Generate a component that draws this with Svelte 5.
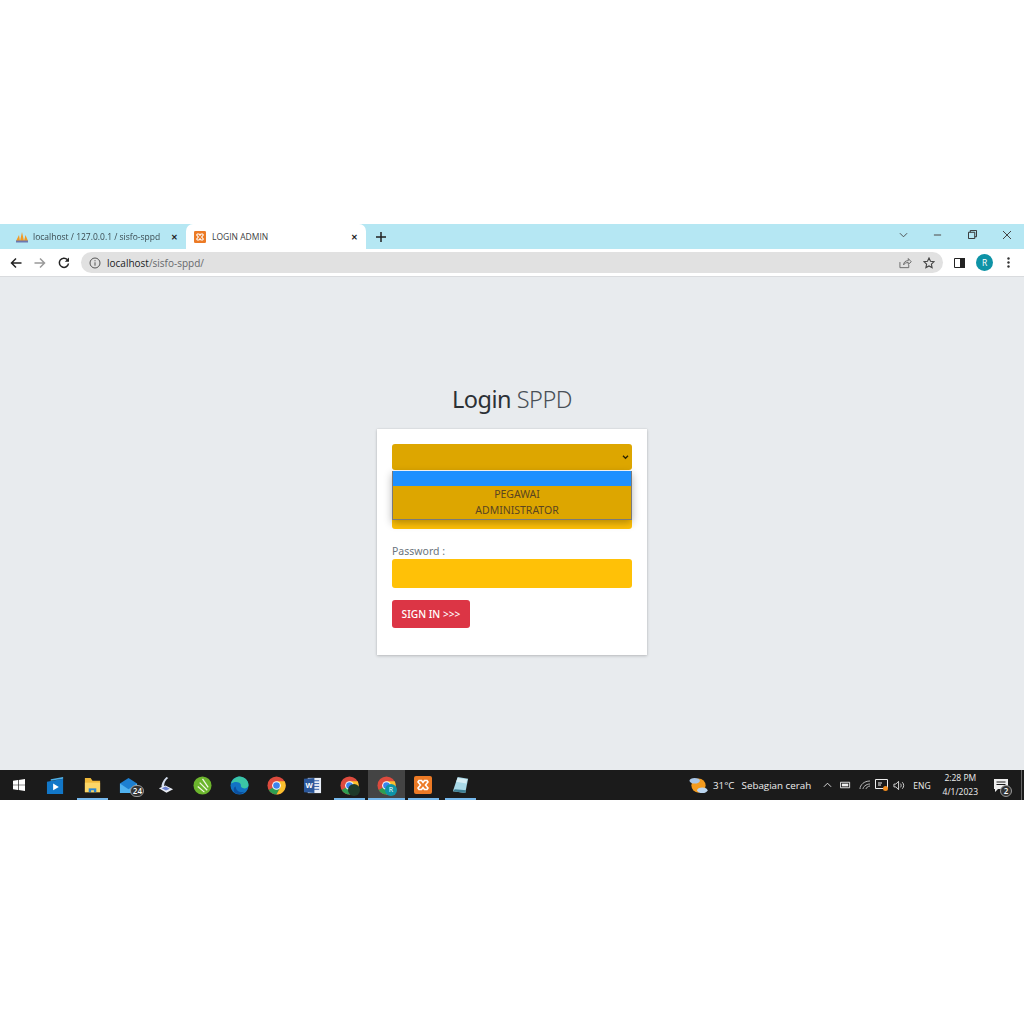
<script>
  const taskIcons = [
    { id: 'video' },
    { id: 'folder', open: true },
    { id: 'mail' },
    { id: 'scanner' },
    { id: 'corel' },
    { id: 'edge' },
    { id: 'chrome' },
    { id: 'word' },
    { id: 'chrome', badge: 'photo', open: true },
    { id: 'chrome', badge: 'r', open: true, active: true },
    { id: 'xampp', open: true },
    { id: 'note', open: true }
  ];
</script>

{#snippet chrome()}
  <svg viewBox="0 0 20 20" width="19" height="19">
    <circle cx="10" cy="10" r="9.5" fill="#dd4b3e" />
    <path d="M10 10 1.8 14.8A9.5 9.5 0 0 0 10 19.5L14.8 11z" fill="#2f9e52" />
    <path d="M10 5.5h8.6A9.5 9.5 0 0 1 10 19.5L14 12z" fill="#fbc02d" />
    <circle cx="10" cy="10" r="4.6" fill="#fff" />
    <circle cx="10" cy="10" r="3.5" fill="#3d84ec" />
  </svg>
{/snippet}

{#snippet xampp(size)}
  <svg viewBox="0 0 18 18" width={size} height={size}>
    <rect width="18" height="18" rx="2" fill="#ec7a25" />
    <path d="M5 4.5h2.5l1.5 2 1.500-2H13l1 1.500-2.500 3 2.500 3-1 1.500h-2.500l-1.500-2-1.500 2H5L4 12l2.500-3L4 6z" fill="none" stroke="#fff" stroke-width="1.600" />
  </svg>
{/snippet}

<div class="screen">
  <div class="browser">
    <div class="tabstrip">
      <div class="tab">
        <svg class="favicon" viewBox="0 0 14 12" width="14" height="12">
          <path d="M1 10 4 4l1 6zM5 10l2-9 2 9zM9 10l1.500-6L13 10z" fill="#f09a24" />
          <rect x="1" y="9.500" width="12" height="2" fill="#6c78af" />
        </svg>
        <span class="tab-title fade">localhost / 127.0.0.1 / sisfo-sppd</span>
        <span class="tab-close">✕</span>
      </div>
      <div class="tab active">
        {@render xampp(12)}
        <span class="tab-title">LOGIN ADMIN</span>
        <span class="tab-close">✕</span>
      </div>
      <svg class="newtab" viewBox="0 0 10 10" width="10" height="10">
        <path d="M5 0v10M0 5h10" stroke="#222" stroke-width="1.500" />
      </svg>
      <div class="window-controls">
        <svg viewBox="0 0 10 6" width="9" height="6"><path d="M1 1l4 4 4-4" fill="none" stroke="#444" /></svg>
        <svg viewBox="0 0 10 2" width="9" height="2"><path d="M1 1h8" stroke="#555" stroke-width="1.200" /></svg>
        <svg viewBox="0 0 10 10" width="9" height="9"><path d="M.5 2.500h7v7h-7zM2.500 2.500v-2h7v7h-2" fill="none" stroke="#333" stroke-width="1.100" /></svg>
        <svg viewBox="0 0 10 10" width="10" height="10"><path d="M1 1l8 8M9 1l-8 8" stroke="#444" /></svg>
      </div>
    </div>

    <div class="toolbar">
      <svg class="nav" viewBox="0 0 12 12" width="12" height="12"><path d="M11.500 6H1.500M6 1.500 1.500 6 6 10.500" fill="none" stroke="#222" stroke-width="1.500" /></svg>
      <svg class="nav" viewBox="0 0 12 12" width="12" height="12"><path d="M.5 6h10M6 1.500 10.500 6 6 10.500" fill="none" stroke="#999" stroke-width="1.500" /></svg>
      <svg class="nav" viewBox="0 0 12 12" width="12" height="12"><path d="M10.500 6.500A4.600 4.600 0 1 1 9.300 2.600" fill="none" stroke="#222" stroke-width="1.500" /><path d="M11 .5v4.200H6.800z" fill="#222" /></svg>
      <div class="omnibox">
        <svg viewBox="0 0 12 12" width="12" height="12"><circle cx="6" cy="6" r="5" fill="none" stroke="#555" /><path d="M6 5.300v3.400M6 3.200v1.100" stroke="#555" /></svg>
        <span class="url"><b>localhost</b>/sisfo-sppd/</span>
        <svg class="share" viewBox="0 0 14 12" width="13" height="12"><path d="M1 5v6h9.500V8M5 8c0-3 2-4.500 5-4.500V1.200L13.200 4.700 10 7.500V5.500C8 5.500 6 6 5 8z" fill="none" stroke="#666" /></svg>
        <svg viewBox="0 0 12 12" width="12" height="12"><path d="M6 1l1.500 3.300 3.500.4-2.600 2.400.7 3.500L6 8.900l-3.100 1.700.7-3.500L1 4.700l3.500-.4z" fill="none" stroke="#444" stroke-width="1.100" /></svg>
      </div>
      <svg class="sidepanel" viewBox="0 0 11 10" width="11" height="10"><path d="M.5.500h10v9H.5z" fill="none" stroke="#222" /><rect x="6" y="0" width="5" height="10" fill="#222" /></svg>
      <span class="avatar">R</span>
      <svg class="dots" viewBox="0 0 3 11" width="3" height="11"><circle cx="1.500" cy="1.500" r="1.200" fill="#333" /><circle cx="1.500" cy="5.500" r="1.200" fill="#333" /><circle cx="1.500" cy="9.500" r="1.200" fill="#333" /></svg>
    </div>

    <main class="page">
      <h1 class="logo"><b>Login</b> SPPD</h1>
      <div class="card">
        <div class="group level">
          <div class="select">
            <svg viewBox="0 0 8 6" width="7" height="5"><path d="M1 1l3 3 3-3" fill="none" stroke="#2b2200" stroke-width="1.600" /></svg>
          </div>
          <div class="dropdown">
            <div class="option selected">&nbsp;</div>
            <div class="option">PEGAWAI</div>
            <div class="option">ADMINISTRATOR</div>
          </div>
        </div>
        <div class="group username">
          <div class="input short"></div>
        </div>
        <div class="group">
          <div class="label">Password :</div>
          <div class="input"></div>
        </div>
        <button type="button" class="signin">SIGN IN &gt;&gt;&gt;</button>
      </div>
    </main>

    <div class="taskbar">
      <div class="start">
        <svg viewBox="0 0 12 12" width="12" height="12">
          <path d="M0 1.700 5 1v4.700H0zM5.700.9 12 0v5.700H5.700zM0 6.300h5V11l-5-.7zM5.700 6.300H12V12l-6.300-.9z" fill="#fff" />
        </svg>
      </div>
      {#each taskIcons as icon}
        <div class="task" class:open={icon.open} class:current={icon.active}>
          {#if icon.id === 'video'}
            <svg viewBox="0 0 20 20" width="19" height="19">
              <path d="M1 6 18 3v16H1z" fill="#1277c8" /><path d="M5 3.500 18 1v2L5 5z" fill="#4fb0e8" />
              <path d="M7.500 8v7l6-3.500z" fill="#fff" />
            </svg>
          {:else if icon.id === 'folder'}
            <svg viewBox="0 0 20 20" width="19" height="19">
              <path d="M2 2h6l2 3h8v12H2z" fill="#f0b93a" /><path d="M2 7h16v10H2z" fill="#fbd667" />
              <path d="M6 17v-4h8v4z" fill="#2a86d0" /><path d="M8.500 17v-2h3v2z" fill="#fbd667" />
            </svg>
          {:else if icon.id === 'mail'}
            <svg viewBox="0 0 20 20" width="19" height="19">
              <path d="M1 8l9-6 9 6v10H1z" fill="#1d7fd1" /><path d="M1 8l9 6 9-6v10H1z" fill="#4fb2f0" />
            </svg>
            <span class="count">24</span>
          {:else if icon.id === 'scanner'}
            <svg viewBox="0 0 20 20" width="19" height="19">
              <path d="M11 1C7 5 5 9 6 13l3-1c-1-3 0-7 4-10z" fill="#d5deee" />
              <path d="M3 13l7-3 8 4-7 3.500z" fill="#e8ecf4" /><path d="M6 13l4-2 4.500 2.500-4 1.800z" fill="#6a7fd0" />
            </svg>
          {:else if icon.id === 'corel'}
            <svg viewBox="0 0 20 20" width="19" height="19">
              <circle cx="10" cy="10" r="9.500" fill="#6cb52d" />
              <path d="M5 11l7 6M7 7l8 8M10 3l6 9" stroke="#f2f7e6" stroke-width="1.300" />
            </svg>
          {:else if icon.id === 'edge'}
            <svg viewBox="0 0 20 20" width="19" height="19">
              <circle cx="10" cy="10" r="9.500" fill="#1273c4" />
              <path d="M1 8C3 2 8 .5 10 .5c5 0 9.500 4 9.500 9 0 3-3 4-5.500 3.500-2-.5-3-2-2.500-3.500C11 6 5 5 1 8z" fill="#3bc6a5" />
              <path d="M6 11c0 4 4 7 9 5.500-2 2.500-7 3.500-10 1C3 15 4 11 6 11z" fill="#0c4f9e" />
            </svg>
          {:else if icon.id === 'chrome'}
            {@render chrome()}
            {#if icon.badge === 'photo'}
              <span class="badge photo"></span>
            {:else if icon.badge === 'r'}
              <span class="badge">R</span>
            {/if}
          {:else if icon.id === 'word'}
            <svg viewBox="0 0 20 20" width="19" height="19">
              <rect x="5" y="2" width="14" height="16" fill="#e8eef8" />
              <path d="M11 5h6M11 8h6M11 11h6M11 14h6" stroke="#2b5aa6" />
              <path d="M1 3l11-1v16L1 17z" fill="#2b579a" />
              <text x="6.500" y="13" font-size="8" font-family="Liberation Sans" font-weight="700" fill="#fff" text-anchor="middle">W</text>
            </svg>
          {:else if icon.id === 'xampp'}
            {@render xampp(18)}
          {:else if icon.id === 'note'}
            <svg viewBox="0 0 20 20" width="19" height="19">
              <path d="M7 1l11 2-3 15-13-2z" fill="#a9d9e8" /><path d="M2 16l13 2 1-3-12-1z" fill="#3e7f95" />
              <path d="M7 2l10 1.800-1 4-10.500-1.800z" fill="#d7eef5" />
            </svg>
          {/if}
        </div>
      {/each}

      <div class="tray">
        <svg class="weather" viewBox="0 0 20 20" width="19" height="19">
          <circle cx="10" cy="10" r="7.500" fill="#f39b1f" />
          <ellipse cx="6" cy="5" rx="5.500" ry="3" fill="#a9c6e8" />
          <ellipse cx="14" cy="15" rx="5.500" ry="3" fill="#bcd6f0" />
        </svg>
        <span class="temp">31°C</span>
        <span class="cond">Sebagian cerah</span>
        <svg class="t-chev" viewBox="0 0 10 6" width="9" height="6"><path d="M1 5l4-4 4 4" fill="none" stroke="#eee" /></svg>
        <svg class="t-batt" viewBox="0 0 12 8" width="11" height="8"><path d="M.5 1h10v6H.5z" fill="none" stroke="#eee" /><rect x="2" y="2.500" width="7" height="3" fill="#eee" /></svg>
        <svg class="t-wifi" viewBox="0 0 12 10" width="12" height="10"><path d="M1 9C1 5 5 1 11 1M4 9c0-2 3-5 7-5M7 9c0-1 2-3 4-3" fill="none" stroke="#bbb" /></svg>
        <svg class="t-meet" viewBox="0 0 14 13" width="14" height="13"><path d="M.5.500h12v9H.5z" fill="none" stroke="#eee" /><path d="M3 4h4M3 6h3" stroke="#eee" /><circle cx="10.500" cy="9.500" r="2.500" fill="#f28c1e" /></svg>
        <svg class="t-vol" viewBox="0 0 14 11" width="13" height="11"><path d="M1 4v3h2l3 3V1L3 4zM8 3.500c1 1 1 3 0 4M10 2c2 2 2 5 0 7" fill="none" stroke="#ddd" /></svg>
        <span class="lang">ENG</span>
        <div class="clock"><span>2:28 PM</span><span>4/1/2023</span></div>
        <div class="notify">
          <svg viewBox="0 0 14 13" width="14" height="13"><path d="M0 0h14v10H4l-3 3v-3H0z" fill="#eee" /><path d="M2.500 3h9M2.500 5.500h9" stroke="#1b1b1b" /></svg>
          <span class="count small">2</span>
        </div>
        <div class="peek"></div>
      </div>
    </div>
  </div>
</div>

<style>
  :global(body) {
    margin: 0;
    background: #fff;
  }

  .screen {
    height: 1024px;
    padding-top: 224px;
    box-sizing: border-box;
    background: #fff;
    font-family: "Open Sans", "Liberation Sans", sans-serif;
  }

  .browser {
    display: flex;
    flex-direction: column;
    height: 576px;
  }

  .tabstrip {
    height: 25px;
    flex: none;
    display: flex;
    align-items: stretch;
    background: #b5e7f3;
  }

  .tab {
    width: 186px;
    box-sizing: border-box;
    padding: 0 8px 0 15px;
    display: flex;
    align-items: center;
    gap: 4px;
    font-size: 8.500px;
    color: #3b4a50;
    white-space: nowrap;
  }

  .tab.active {
    width: 180px;
    padding: 0 8px;
    gap: 6px;
    background: #fff;
    border-radius: 7px 7px 0 0;
    color: #3c4043;
  }

  .tab-title {
    flex: 1;
    overflow: hidden;
  }

  .tab-title.fade {
    mask-image: linear-gradient(to left, transparent 0, #000 8px);
  }

  .tab-close {
    font-size: 8px;
    font-weight: 700;
    color: #222;
  }

  .newtab {
    align-self: center;
    margin-left: 10px;
  }

  .window-controls {
    margin-left: auto;
    width: 125px;
    padding-right: 12px;
    box-sizing: border-box;
    display: flex;
    align-items: center;
    justify-content: space-between;
    margin-top: -4px;
  }

  .toolbar {
    height: 27px;
    flex: none;
    display: flex;
    align-items: center;
    background: #fff;
    padding: 0 14px 0 10px;
    border-bottom: 1px solid #d9dbde;
  }

  .toolbar .nav {
    margin-right: 12px;
  }

  .omnibox {
    margin-left: -1px;
    flex: 1;
    height: 21px;
    border-radius: 11px;
    background: #e1e1e1;
    display: flex;
    align-items: center;
    padding: 0 8px;
    gap: 6px;
  }

  .url {
    flex: 1;
    font-size: 10px;
    color: #66686b;
  }

  .url b {
    font-weight: 400;
    color: #202124;
  }

  .share {
    margin-right: 5px;
  }

  .sidepanel {
    margin-left: 11px;
  }

  .avatar {
    margin-left: 11px;
    width: 17px;
    height: 17px;
    border-radius: 50%;
    background: #0e93a6;
    color: #fff;
    font-size: 8.500px;
    display: flex;
    align-items: center;
    justify-content: center;
  }

  .dots {
    margin-left: 14px;
  }

  .page {
    flex: 1;
    background: #e8ebee;
    display: flex;
    flex-direction: column;
    align-items: center;
    padding-top: 104px;
    font-family: "Noto Sans", "Open Sans", sans-serif;
  }

  .logo {
    margin: 0 0 12px;
    height: 36px;
    line-height: 36px;
    font-size: 23.500px;
    font-weight: 300;
    color: #495057;
    letter-spacing: -0.5px;
  }

  .logo b {
    font-weight: 400;
    color: #2b3035;
  }

  .card {
    width: 270px;
    height: 226px;
    box-sizing: border-box;
    background: #fff;
    padding: 15px;
    box-shadow: 0 0 1px rgba(0, 0, 0, 0.13), 0 1px 3px rgba(0, 0, 0, 0.2);
  }

  .group {
    position: relative;
  }

  .level {
    z-index: 1;
  }

  .select {
    height: 26px;
    box-sizing: border-box;
    border-radius: 3px;
    background: #dda600;
    display: flex;
    align-items: center;
    justify-content: flex-end;
    padding-right: 3px;
  }

  .dropdown {
    position: absolute;
    top: 27px;
    left: 0;
    right: 0;
    box-sizing: border-box;
    height: 49px;
    border: 1px solid #7a7a7a;
    border-top: 0;
    background: #dda600;
    box-shadow: 0 3px 8px rgba(0, 0, 0, 0.3);
    text-align: center;
    font-size: 10.500px;
    line-height: 16px;
    color: #5a4520;
  }

  .option {
    height: 16px;
    padding-left: 10px;
    white-space: nowrap;
  }

  .option.selected {
    height: 15px;
    background: #1e90ff;
  }

  .username {
    margin-top: 30px;
    height: 29px;
  }

  .input {
    height: 29px;
    border-radius: 3px;
    background: #ffc107;
  }

  .label {
    margin-top: 14px;
    height: 16px;
    line-height: 16px;
    font-size: 10.500px;
    color: #6c757d;
  }

  .signin {
    display: block;
    margin-top: 12px;
    width: 78px;
    height: 28px;
    padding: 0;
    border: 0;
    border-radius: 3px;
    background: #dc3545;
    color: #fff;
    font-family: inherit;
    font-size: 10.200px;
    font-weight: 500;
  }

  .taskbar {
    height: 30px;
    flex: none;
    background: #1b1b1b;
    display: flex;
    align-items: stretch;
    color: #eee;
  }

  .start {
    width: 37px;
    display: flex;
    align-items: center;
    justify-content: center;
  }

  .task {
    width: 36.800px;
    position: relative;
    display: flex;
    align-items: center;
    justify-content: center;
    box-sizing: border-box;
  }

  .task.open::after {
    content: "";
    position: absolute;
    left: 3px;
    right: 3px;
    bottom: 0;
    height: 2px;
    background: #76b9ed;
  }

  .task.current {
    background: #444;
  }

  .task.current::after {
    left: 0;
    right: 0;
  }

  .count {
    position: absolute;
    right: 3px;
    bottom: 3px;
    min-width: 14px;
    height: 12px;
    border-radius: 7px;
    border: 1px solid #999;
    box-sizing: border-box;
    background: #333;
    color: #fff;
    font-size: 8px;
    font-weight: 600;
    line-height: 10px;
    text-align: center;
  }

  .count.small {
    right: -4px;
    bottom: -5px;
    min-width: 12px;
  }

  .badge {
    position: absolute;
    right: 8px;
    bottom: 4px;
    width: 12px;
    height: 12px;
    border-radius: 50%;
    background: #0e93a6;
    color: #fff;
    font-size: 7px;
    line-height: 12px;
    text-align: center;
  }

  .badge.photo {
    background: #1d3a2a;
  }

  .tray {
    margin-left: auto;
    display: flex;
    align-items: center;
    font-size: 9.800px;
    white-space: nowrap;
  }

  .temp {
    margin-left: 5px;
  }

  .cond {
    margin-left: 7px;
  }

  .t-chev {
    margin-left: 12px;
  }

  .t-batt {
    margin-left: 8px;
  }

  .t-wifi {
    margin-left: 8px;
  }

  .t-meet {
    margin-left: 4px;
  }

  .t-vol {
    margin-left: 4px;
  }

  .lang {
    margin-left: 7px;
    font-size: 8.500px;
  }

  .clock {
    margin-left: 12px;
    display: flex;
    flex-direction: column;
    align-items: center;
    font-size: 8.500px;
    line-height: 14px;
  }

  .notify {
    margin-left: 16px;
    position: relative;
    display: flex;
  }

  .peek {
    margin-left: 13px;
    width: 3px;
    height: 100%;
    border-left: 1px solid #666;
    box-sizing: border-box;
  }
</style>
